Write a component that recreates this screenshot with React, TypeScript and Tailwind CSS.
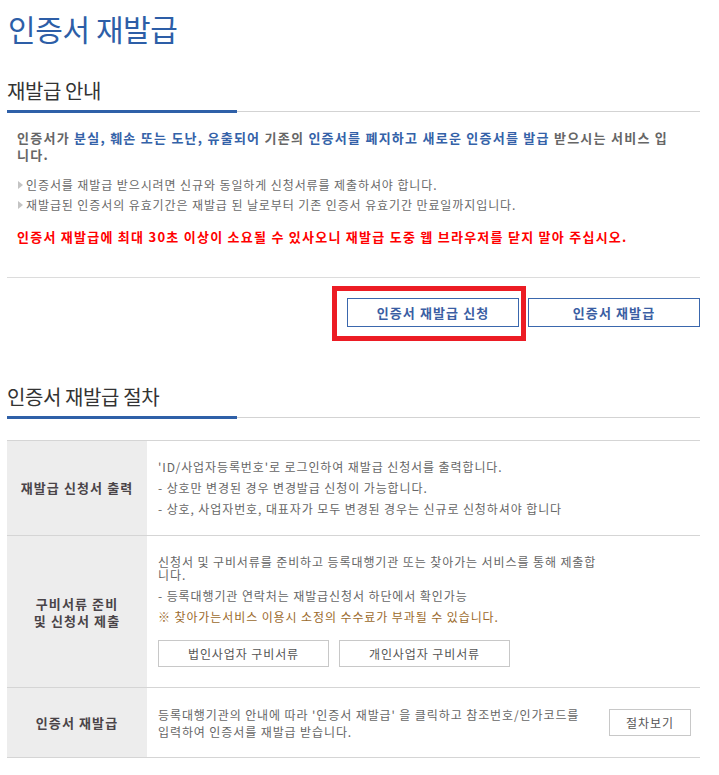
import React from 'react';

const font = { fontFamily: '"Noto Sans CJK KR", "Noto Sans", sans-serif' };

function SectionHeading({ children, className = '' }: { children: React.ReactNode; className?: string }) {
  return (
    <div className={className}>
      <h2 className="text-[20px] leading-[24px] text-[#333] tracking-[-0.4px] pb-[7px]">{children}</h2>
      <div className="flex items-start h-[3px]">
        <div className="w-[230px] h-[3px] bg-[#2f60a8]" />
        <div className="flex-1 h-px mt-px bg-[#d3d3d3]" />
      </div>
    </div>
  );
}

function Bullet({ children }: { children: React.ReactNode }) {
  return (
    <li className="flex items-center leading-[20px]">
      <span className="w-0 h-0 mr-[3px] ml-[1px] border-y-[4px] border-y-transparent border-l-[5px] border-l-[#c4c4c4]" />
      <span>{children}</span>
    </li>
  );
}

export default function App() {
  return (
    <div style={font} className="w-[719px] min-h-[775px] bg-white pl-[7px] pr-[19px] pt-[10px]">
      <h1 className="text-[30px] leading-[36px] text-[#2d5ea7] tracking-[-0.4px] pl-px">인증서 재발급</h1>

      <SectionHeading className="mt-[33px]">재발급 안내</SectionHeading>

      <div className="pl-[10px] pt-[16px] pb-[30px] border-b border-[#dcdcdc]">
        <p className="text-[13px] leading-[17px] font-bold text-[#666] tracking-[1.25px]">
          인증서가 <span className="text-[#3462a8]">분실, 훼손 또는 도난, 유출되어</span> 기존의{' '}
          <span className="text-[#3462a8]">인증서를 폐지하고 새로운 인증서를 발급</span> 받으시는 서비스 입<br />니다.
        </p>
        <ul className="mt-[12px] text-[12px] text-[#6a6a6a] tracking-[0.9px]">
          <Bullet>인증서를 재발급 받으시려면 신규와 동일하게 신청서류를 제출하셔야 합니다.</Bullet>
          <Bullet>재발급된 인증서의 유효기간은 재발급 된 날로부터 기존 인증서 유효기간 만료일까지입니다.</Bullet>
        </ul>
        <p className="mt-[12px] text-[13px] leading-[20px] font-bold text-[#ff0000] tracking-[1.25px]">
          인증서 재발급에 최대 30초 이상이 소요될 수 있사오니 재발급 도중 웹 브라우저를 닫지 말아 주십시오.
        </p>
      </div>

      <div className="flex justify-end gap-[9px] mt-[20px]">
        <div className="relative">
          <button className="w-[172px] h-[29px] border border-[#3a67ad] text-[13px] font-bold text-[#3a5ea3] tracking-[1.1px]">
            인증서 재발급 신청
          </button>
          <div className="absolute left-[-15px] right-[-7px] top-[-12px] bottom-[-14px] border-[5px] border-[#ec1c24] pointer-events-none" />
        </div>
        <button className="w-[172px] h-[29px] border border-[#3a67ad] text-[13px] font-bold text-[#3a5ea3] tracking-[1.1px]">
          인증서 재발급
        </button>
      </div>

      <SectionHeading className="mt-[58px]">인증서 재발급 절차</SectionHeading>

      <div className="mt-[21px] border-t border-[#d5d5d5] text-[12px] text-[#666] tracking-[0.9px]">
        <div className="grid grid-cols-[140px_1fr] border-b border-[#d5d5d5]">
          <div className="bg-[#ededed] flex items-center justify-center text-[13px] font-bold text-[#4a4448] tracking-[1.1px]">
            재발급 신청서 출력
          </div>
          <div className="pl-[11px] pt-[15px] pb-[16px] leading-[21px]">
            <p>'ID/사업자등록번호'로 로그인하여 재발급 신청서를 출력합니다.</p>
            <p>- 상호만 변경된 경우 변경발급 신청이 가능합니다.</p>
            <p>- 상호, 사업자번호, 대표자가 모두 변경된 경우는 신규로 신청하셔야 합니다</p>
          </div>
        </div>

        <div className="grid grid-cols-[140px_1fr] border-b border-[#d5d5d5]">
          <div className="bg-[#ededed] flex flex-col items-center justify-center text-[13px] leading-[17px] font-bold text-[#4a4448] tracking-[1.1px]">
            <span>구비서류 준비</span>
            <span>및 신청서 제출</span>
          </div>
          <div className="pl-[11px] pt-[19px] pb-[20px]">
            <p className="leading-[13px]">
              신청서 및 구비서류를 준비하고 등록대행기관 또는 찾아가는 서비스를 통해 제출합<br />니다.
            </p>
            <p className="mt-[4px] leading-[21px]">- 등록대행기관 연락처는 재발급신청서 하단에서 확인가능</p>
            <p className="leading-[21px] text-[#9b6a2c]">※ 찾아가는서비스 이용시 소정의 수수료가 부과될 수 있습니다.</p>
            <div className="flex gap-[10px] mt-[13px]">
              <button className="w-[171px] h-[27px] border border-[#c8c8c8] text-[12px] text-[#555] tracking-[0.9px]">법인사업자 구비서류</button>
              <button className="w-[171px] h-[27px] border border-[#c8c8c8] text-[12px] text-[#555] tracking-[0.9px]">개인사업자 구비서류</button>
            </div>
          </div>
        </div>

        <div className="grid grid-cols-[140px_1fr] border-b border-[#d5d5d5]">
          <div className="bg-[#ededed] flex items-center justify-center text-[13px] font-bold text-[#4a4448] tracking-[1.1px]">
            인증서 재발급
          </div>
          <div className="pl-[11px] pr-[9px] h-[69px] flex items-center gap-[8px]">
            <p className="flex-1 leading-[17px]">
              등록대행기관의 안내에 따라 '인증서 재발급' 을 클릭하고 참조번호/인가코드를<br />입력하여 인증서를 재발급 받습니다.
            </p>
            <button className="w-[82px] h-[27px] border border-[#c8c8c8] text-[12px] text-[#555] tracking-[0.9px] shrink-0">절차보기</button>
          </div>
        </div>
      </div>
    </div>
  );
}
